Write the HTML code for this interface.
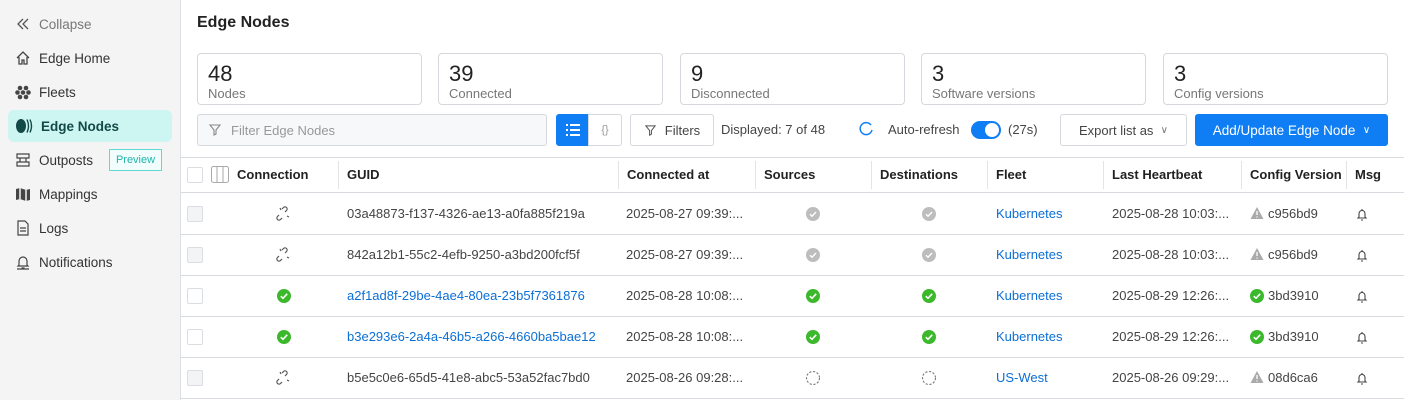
<!DOCTYPE html>
<html><head><style>
*{box-sizing:border-box;margin:0;padding:0}
body{width:1404px;height:400px;overflow:hidden;font-family:"Liberation Sans",sans-serif;font-size:13px;color:#333;background:#fff;position:relative}
.side{position:absolute;left:0;top:0;width:181px;height:400px;background:#f4f4f5;border-right:1px solid #dcdfe3}
.nav{position:absolute;left:8px;width:164px;height:32px;display:flex;align-items:center;padding-left:7px;font-size:13.5px;color:#333}
.nav svg{margin-right:8px}
.nav.act{background:#cdf5f2;border-radius:6px;font-weight:bold;color:#124a47}
.pv{position:absolute;left:109px;top:149px;width:53px;height:22px;border:1px solid #5ddbd3;color:#1fb5ab;font-size:11px;display:flex;align-items:center;justify-content:center;background:#f0fdfc}
.abs{position:absolute}
.card{position:absolute;top:53px;width:225px;height:52px;border:1px solid #d5d8dc;border-radius:4px;padding:8px 10px 0}
.card b{display:block;font-weight:normal;font-size:22px;color:#222;line-height:24px}
.card span{color:#777;font-size:13px}
.btn{position:absolute;top:114px;height:32px;border:1px solid #d5d8dc;border-radius:3px;display:flex;align-items:center;justify-content:center;color:#444}
.th{position:absolute;top:158px;height:35px;line-height:33px;font-weight:bold;font-size:13px;color:#222}
.vl{position:absolute;top:161px;width:1px;height:28px;background:#e2e4e7}
.hl{position:absolute;left:181px;width:1223px;height:1px;background:#d7dbe0}
.cell{position:absolute;font-size:13px;color:#444;white-space:nowrap}
.blue{color:#0b6fd6}
.cb{position:absolute;left:187px;width:16px;height:16px;border:1px solid #dadde1;border-radius:2px;background:#f3f4f5}
</style></head><body>
<div class="side">
 <div class="nav" style="top:8px;color:#777"><svg width="16" height="14" viewBox="0 0 16 14"><path d="M8 2 3 7l5 5M13 2 8 7l5 5" fill="none" stroke="#555" stroke-width="1.3"/></svg>Collapse</div>
 <div class="nav" style="top:42px"><svg width="16" height="16" viewBox="0 0 16 16"><path d="M2 8 8 2l6 6M4 7v7h3v-4h2v4h3V7" fill="none" stroke="#444" stroke-width="1.3"/></svg>Edge Home</div>
 <div class="nav" style="top:76px"><svg width="16" height="16" viewBox="0 0 16 16" fill="#444"><circle cx="5" cy="4" r="2.3"/><circle cx="11" cy="4" r="2.3"/><circle cx="2.5" cy="8.5" r="2.3"/><circle cx="8" cy="8.5" r="2.3"/><circle cx="13.5" cy="8.5" r="2.3"/><circle cx="5" cy="13" r="2.3"/><circle cx="11" cy="13" r="2.3"/></svg>Fleets</div>
 <div class="nav act" style="top:110px"><svg width="18" height="16" viewBox="0 0 18 16"><ellipse cx="6" cy="8" rx="5" ry="7" fill="#124a47"/><path d="M12 1.5q3 6.5 0 13M15 1.5q3 6.5 0 13" fill="none" stroke="#124a47" stroke-width="1.4"/></svg>Edge Nodes</div>
 <div class="nav" style="top:144px"><svg width="16" height="16" viewBox="0 0 16 16"><path d="M2 2h12v4H2zM5 6v4M11 6v4M2 10h12v4H2z" fill="none" stroke="#444" stroke-width="1.2"/></svg>Outposts</div>
 <div class="pv">Preview</div>
 <div class="nav" style="top:178px"><svg width="16" height="16" viewBox="0 0 16 16"><path d="M1 3l4-1 6 2 4-1v11l-4 1-6-2-4 1z" fill="#444"/><path d="M5 2v11M11 4v11" stroke="#f4f4f5" stroke-width="1.5"/></svg>Mappings</div>
 <div class="nav" style="top:212px"><svg width="16" height="16" viewBox="0 0 16 16"><path d="M3 1h7l3 3v11H3zM5 8h6M5 11h6" fill="none" stroke="#444" stroke-width="1.2"/></svg>Logs</div>
 <div class="nav" style="top:246px"><svg width="16" height="16" viewBox="0 0 16 16"><path d="M4 11V7a4 4 0 0 1 8 0v4l1 1H3zM6.5 14h3M2 15h12" fill="none" stroke="#444" stroke-width="1.2"/></svg>Notifications</div>
</div>

<div class="abs" style="left:197px;top:14px;font-size:16px;font-weight:bold;color:#222">Edge Nodes</div>
<div class="card" style="left:197px"><b>48</b><span>Nodes</span></div>
<div class="card" style="left:438px"><b>39</b><span>Connected</span></div>
<div class="card" style="left:680px"><b>9</b><span>Disconnected</span></div>
<div class="card" style="left:921px"><b>3</b><span>Software versions</span></div>
<div class="card" style="left:1163px"><b>3</b><span>Config versions</span></div>

<div class="btn" style="left:197px;width:350px;justify-content:flex-start;padding-left:10px;background:#f7f8f9;color:#999"><svg width="14" height="14" viewBox="0 0 14 14" style="margin-right:9px"><path d="M2 2h10L8 7v4l-2 1V7z" fill="none" stroke="#888" stroke-width="1.1"/></svg>Filter Edge Nodes</div>
<div class="btn" style="left:556px;width:33px;background:#0f7ef5;border-color:#0f7ef5;border-radius:3px 0 0 3px"><svg width="14" height="12" viewBox="0 0 14 12" fill="#fff"><rect x="0" y="0" width="2" height="2"/><rect x="4" y="0" width="10" height="2"/><rect x="0" y="5" width="2" height="2"/><rect x="4" y="5" width="10" height="2"/><rect x="0" y="10" width="2" height="2"/><rect x="4" y="10" width="10" height="2"/></svg></div>
<div class="btn" style="left:588px;width:34px;border-radius:0 3px 3px 0;color:#999;font-size:11px">{}</div>
<div class="btn" style="left:630px;width:84px"><svg width="13" height="13" viewBox="0 0 14 14" style="margin-right:8px"><path d="M2 2h10L8 7v4l-2 1V7z" fill="none" stroke="#555" stroke-width="1.1"/></svg>Filters</div>
<div class="cell" style="left:721px;top:122px">Displayed: 7 of 48</div>
<svg class="abs" style="left:858px;top:121px" width="16" height="16" viewBox="0 0 16 16"><path d="M13 4A6 6 0 1 0 14 9" fill="none" stroke="#0f7ef5" stroke-width="1.5"/></svg>
<div class="cell" style="left:888px;top:122px">Auto-refresh</div>
<div class="abs" style="left:971px;top:121px;width:30px;height:18px;border-radius:9px;background:#0f7ef5"><div style="position:absolute;right:2px;top:2px;width:14px;height:14px;border-radius:50%;background:#fff"></div></div>
<div class="cell" style="left:1008px;top:122px">(27s)</div>
<div class="btn" style="left:1060px;width:127px">Export list as &nbsp;<span style="font-size:10px;color:#777">∨</span></div>
<div class="btn" style="left:1195px;width:193px;background:#0f7ef5;border-color:#0f7ef5;color:#fff;font-size:13.5px">Add/Update Edge Node &nbsp;<span style="font-size:10px">∨</span></div>

<div class="hl" style="top:157px"></div>
<div class="abs" style="left:181px;top:158px;width:1223px;height:35px;background:#fff"></div>
<div class="cb" style="top:167px;background:#fff"></div>
<svg class="abs" style="left:211px;top:166px" width="18" height="17" viewBox="0 0 18 17"><rect x="0.5" y="0.5" width="17" height="16" rx="2" fill="none" stroke="#aaa"/><path d="M6 1v15M12 1v15" stroke="#aaa"/></svg>
<div class="th" style="left:237px">Connection</div>
<div class="vl" style="left:338px"></div><div class="th" style="left:347px">GUID</div>
<div class="vl" style="left:618px"></div><div class="th" style="left:627px">Connected at</div>
<div class="vl" style="left:755px"></div><div class="th" style="left:764px">Sources</div>
<div class="vl" style="left:871px"></div><div class="th" style="left:880px">Destinations</div>
<div class="vl" style="left:987px"></div><div class="th" style="left:996px">Fleet</div>
<div class="vl" style="left:1103px"></div><div class="th" style="left:1112px">Last Heartbeat</div>
<div class="vl" style="left:1241px"></div><div class="th" style="left:1250px">Config Version</div>
<div class="vl" style="left:1346px"></div><div class="th" style="left:1355px">Msg</div>
<div class="hl" style="top:192px"></div>
<div class="hl" style="top:234px"></div>
<div class="hl" style="top:275px"></div>
<div class="hl" style="top:316px"></div>
<div class="hl" style="top:357px"></div>
<div class="hl" style="top:398px"></div>

<svg width="0" height="0" style="position:absolute"><defs>
<g id="brk"><path d="M3 9 1.5 10.5a2 2 0 0 0 3 3L6 12M9 6l1.5-1.5a2 2 0 0 0-3-3L6 3M5 4 4 2M11 10l2 1" fill="none" stroke="#555" stroke-width="1.2"/></g>
<g id="gok"><circle cx="8" cy="8" r="7" fill="#3cb82c"/><path d="M4.8 8.2 7 10.3 11.2 5.8" fill="none" stroke="#fff" stroke-width="1.6"/></g>
<g id="gray"><circle cx="8" cy="8" r="7" fill="#bdbdbd"/><path d="M5 8.2 7 10.2 11 6" fill="none" stroke="#fff" stroke-width="1.4"/></g>
<g id="dash"><circle cx="8" cy="8" r="6.5" fill="none" stroke="#777" stroke-width="1.1" stroke-dasharray="2.2 1.6"/></g>
<g id="warn"><path d="M7 1 13.5 13h-13z" fill="#aaa"/><path d="M7 5v4M7 10.5v1" stroke="#fff" stroke-width="1.3"/></g>
<g id="bell"><path d="M4 10V6.5a3 3 0 0 1 6 0V10l1 1H3zM6 13h2M7 2v1.5" fill="none" stroke="#444" stroke-width="1.1"/></g>
</defs></svg>

<div class="cb" style="top:206px"></div>
<svg class="abs" style="left:276px;top:206px" width="16" height="16"><use href="#brk"/></svg>
<div class="cell" style="left:347px;top:206px">03a48873-f137-4326-ae13-a0fa885f219a</div>
<div class="cell" style="left:626px;top:206px">2025-08-27 09:39:...</div>
<svg class="abs" style="left:805px;top:206px" width="16" height="16"><use href="#gray"/></svg>
<svg class="abs" style="left:921px;top:206px" width="16" height="16"><use href="#gray"/></svg>
<div class="cell blue" style="left:996px;top:206px">Kubernetes</div>
<div class="cell" style="left:1112px;top:206px">2025-08-28 10:03:...</div>
<svg class="abs" style="left:1250px;top:206px" width="14" height="14"><use href="#warn"/></svg>
<div class="cell" style="left:1268px;top:206px">c956bd9</div>
<svg class="abs" style="left:1355px;top:207px" width="14" height="14"><use href="#bell"/></svg>

<div class="cb" style="top:247px"></div>
<svg class="abs" style="left:276px;top:247px" width="16" height="16"><use href="#brk"/></svg>
<div class="cell" style="left:347px;top:247px">842a12b1-55c2-4efb-9250-a3bd200fcf5f</div>
<div class="cell" style="left:626px;top:247px">2025-08-27 09:39:...</div>
<svg class="abs" style="left:805px;top:247px" width="16" height="16"><use href="#gray"/></svg>
<svg class="abs" style="left:921px;top:247px" width="16" height="16"><use href="#gray"/></svg>
<div class="cell blue" style="left:996px;top:247px">Kubernetes</div>
<div class="cell" style="left:1112px;top:247px">2025-08-28 10:03:...</div>
<svg class="abs" style="left:1250px;top:247px" width="14" height="14"><use href="#warn"/></svg>
<div class="cell" style="left:1268px;top:247px">c956bd9</div>
<svg class="abs" style="left:1355px;top:248px" width="14" height="14"><use href="#bell"/></svg>

<div class="cb" style="top:288px;background:#fff"></div>
<svg class="abs" style="left:276px;top:288px" width="16" height="16"><use href="#gok"/></svg>
<div class="cell blue" style="left:347px;top:288px">a2f1ad8f-29be-4ae4-80ea-23b5f7361876</div>
<div class="cell" style="left:626px;top:288px">2025-08-28 10:08:...</div>
<svg class="abs" style="left:805px;top:288px" width="16" height="16"><use href="#gok"/></svg>
<svg class="abs" style="left:921px;top:288px" width="16" height="16"><use href="#gok"/></svg>
<div class="cell blue" style="left:996px;top:288px">Kubernetes</div>
<div class="cell" style="left:1112px;top:288px">2025-08-29 12:26:...</div>
<svg class="abs" style="left:1249px;top:288px" width="16" height="16"><use href="#gok"/></svg>
<div class="cell" style="left:1268px;top:288px">3bd3910</div>
<svg class="abs" style="left:1355px;top:289px" width="14" height="14"><use href="#bell"/></svg>

<div class="cb" style="top:329px;background:#fff"></div>
<svg class="abs" style="left:276px;top:329px" width="16" height="16"><use href="#gok"/></svg>
<div class="cell blue" style="left:347px;top:329px">b3e293e6-2a4a-46b5-a266-4660ba5bae12</div>
<div class="cell" style="left:626px;top:329px">2025-08-28 10:08:...</div>
<svg class="abs" style="left:805px;top:329px" width="16" height="16"><use href="#gok"/></svg>
<svg class="abs" style="left:921px;top:329px" width="16" height="16"><use href="#gok"/></svg>
<div class="cell blue" style="left:996px;top:329px">Kubernetes</div>
<div class="cell" style="left:1112px;top:329px">2025-08-29 12:26:...</div>
<svg class="abs" style="left:1249px;top:329px" width="16" height="16"><use href="#gok"/></svg>
<div class="cell" style="left:1268px;top:329px">3bd3910</div>
<svg class="abs" style="left:1355px;top:330px" width="14" height="14"><use href="#bell"/></svg>

<div class="cb" style="top:370px"></div>
<svg class="abs" style="left:276px;top:370px" width="16" height="16"><use href="#brk"/></svg>
<div class="cell" style="left:347px;top:370px">b5e5c0e6-65d5-41e8-abc5-53a52fac7bd0</div>
<div class="cell" style="left:626px;top:370px">2025-08-26 09:28:...</div>
<svg class="abs" style="left:805px;top:370px" width="16" height="16"><use href="#dash"/></svg>
<svg class="abs" style="left:921px;top:370px" width="16" height="16"><use href="#dash"/></svg>
<div class="cell blue" style="left:996px;top:370px">US-West</div>
<div class="cell" style="left:1112px;top:370px">2025-08-26 09:29:...</div>
<svg class="abs" style="left:1250px;top:370px" width="14" height="14"><use href="#warn"/></svg>
<div class="cell" style="left:1268px;top:370px">08d6ca6</div>
<svg class="abs" style="left:1355px;top:371px" width="14" height="14"><use href="#bell"/></svg>
</body></html>
